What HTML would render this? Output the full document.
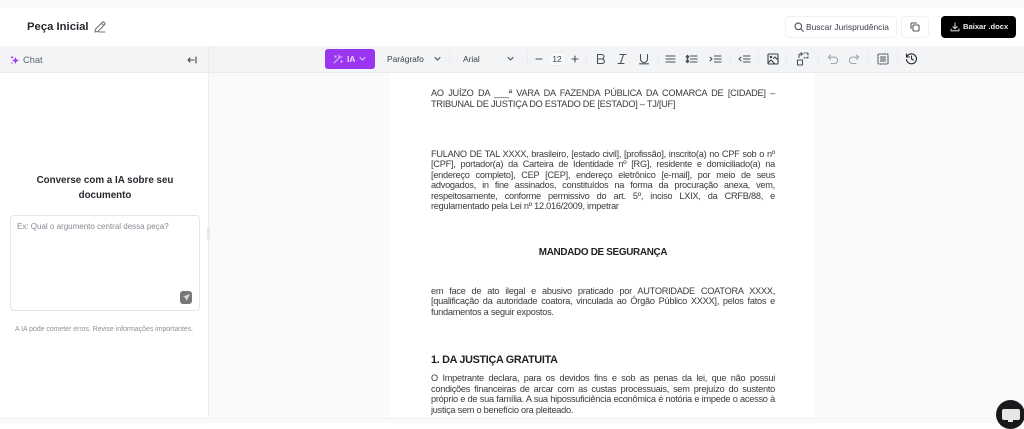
<!DOCTYPE html>
<html lang="pt-BR">
<head>
<meta charset="utf-8">
<title>Peça Inicial</title>
<style>
html,body{margin:0;padding:0;width:1024px;height:422px;overflow:hidden;background:#fff;font-family:"Liberation Sans",sans-serif;color:#1f2329}
.a{position:absolute}
.t{position:absolute;white-space:nowrap}
svg{position:absolute;fill:none;stroke:#4a505a;stroke-width:1.1;stroke-linecap:round;stroke-linejoin:round}
.sep{position:absolute;top:51px;width:1px;height:16px;background:#e9ebee}
.ln{position:absolute;left:431px;width:344px;font-size:9.2px;letter-spacing:-.25px;line-height:11px;height:11px;color:#3a3a3a;text-align:justify;text-align-last:justify;white-space:normal}
.ln.l{text-align-last:left;white-space:nowrap}
.btn{position:absolute;box-sizing:border-box;background:#fff;border:1px solid #f0f1f3;border-radius:4px}
</style>
</head>
<body>
<div class="a" style="left:0;top:0;width:1024px;height:8px;background:#fafafa"></div>

<div class="t" style="left:27px;top:20px;font-size:11.3px;font-weight:bold;line-height:15px;color:#26292e">Peça Inicial</div>
<svg style="left:94px;top:21px;stroke:#777" width="12" height="12" viewBox="0 0 12 12" stroke-width=".9"><path d="M1 11l.6-3L8.500 1.200a1 1 0 0 1 1.400 0l.9.9a1 1 0 0 1 0 1.400L4 10.400zM7.500 2.300l2.200 2.200M5 11h6"/></svg>

<div class="btn" style="left:785px;top:16px;width:112px;height:22px"></div>
<svg style="left:794px;top:22px;stroke:#444" width="10" height="10" viewBox="0 0 10 10"><circle cx="4.300" cy="4.300" r="3.300" stroke-width="1"/><path d="M7 7l2.300 2.300" stroke-width="1"/></svg>
<div class="t" style="left:806px;top:21px;font-size:8.4px;line-height:12px;color:#39404a">Buscar Jurisprudência</div>
<div class="btn" style="left:901px;top:16px;width:28px;height:22px"></div>
<svg style="left:910px;top:22px;stroke:#555" width="10" height="10" viewBox="0 0 10 10" stroke-width=".9"><rect x="3" y="3" width="6" height="6" rx="1"/><path d="M1 6.500V2a1 1 0 0 1 1-1h4.500"/></svg>
<div class="a" style="left:941px;top:16px;width:75px;height:22px;background:#000;border-radius:4px"></div>
<svg style="left:950px;top:22px;stroke:#ccc" width="10" height="10" viewBox="0 0 10 10" stroke-width=".9"><path d="M5 1v5.500M3 4.700l2 2 2-2M1 7v1.800h8V7"/></svg>
<div class="t" style="left:963px;top:21px;font-size:7.6px;font-weight:bold;line-height:12px;color:#eee">Baixar .docx</div>

<!-- toolbar band -->
<div class="a" style="left:0;top:46px;width:1024px;height:26px;background:#f3f4f6;border-bottom:1px solid #e8eaed;box-sizing:content-box"></div>
<div class="a" style="left:208px;top:46px;width:1px;height:26px;background:#e8eaed"></div>

<!-- content background -->
<div class="a" style="left:208px;top:73px;width:816px;height:349px;background:#fafafa"></div>
<div class="a" style="left:208px;top:73px;width:1px;height:349px;background:#eceef0"></div>
<div class="a" style="left:390px;top:73px;width:425px;height:349px;background:#fff"></div>
<div class="a" style="left:207px;top:227px;width:3px;height:12px;background:#e6e8eb"></div>

<!-- sidebar head -->
<svg style="left:10px;top:55px;stroke:none;fill:#a033f5" width="10" height="10" viewBox="0 0 10 10"><path d="M5.500 2l1 2.500L9 5.500l-2.500 1-1 2.500-1-2.500-2.500-1 2.500-1zM2 .5l.5 1.200 1.200.5-1.200.5L2 3.900l-.5-1.200L.3 2.200l1.200-.5zM2 7l.3.8.8.3-.8.3L2 9.200l-.3-.8-.8-.3.8-.3z"/></svg>
<div class="t" style="left:23px;top:54px;font-size:9.3px;line-height:12px;color:#5f656e">Chat</div>
<svg style="left:187px;top:55px;stroke:#444" width="10" height="10" viewBox="0 0 10 10" stroke-width="1"><path d="M9 2v6M7 5H1M3 3L1 5l2 2"/></svg>

<!-- sidebar body -->
<div class="t" style="left:0;top:173px;width:210px;text-align:center;font-size:9.8px;font-weight:bold;line-height:15px;color:#26292e;white-space:normal">Converse com a IA sobre seu<br>documento</div>
<div class="a" style="left:10px;top:215px;width:190px;height:96px;box-sizing:border-box;background:#fff;border:1px solid #e3e5e8;border-radius:4px"></div>
<div class="t" style="left:17px;top:221px;font-size:8px;line-height:12px;color:#858b93">Ex: Qual o argumento central dessa peça?</div>
<div class="a" style="left:180px;top:291px;width:12px;height:13px;background:#777;border-radius:3px"></div>
<svg style="left:183px;top:294px;stroke:none;fill:#ddd" width="7" height="7" viewBox="0 0 7 7"><path d="M7 0L0 2.800l2.400 1L3.500 7z"/></svg>
<div class="t" style="left:15px;top:324px;font-size:6.9px;line-height:11px;color:#8c9199">A IA pode cometer erros. Revise informações importantes.</div>

<!-- toolbar -->
<div class="a" style="left:325px;top:49px;width:50px;height:20px;background:#9a35f2;border-radius:3px"></div>
<svg style="left:333px;top:54px;stroke:#e0c2ff" width="10" height="10" viewBox="0 0 10 10" stroke-width="1"><path d="M1 9l6-6M6 1v2M8 3h1M2 2l1 1M3 2L2 3M8 7l1 1M9 7L8 8"/></svg>
<div class="t" style="left:347px;top:53px;font-size:8.4px;font-weight:bold;line-height:12px;color:#ecdcff">IA</div>
<svg style="left:359px;top:56px;stroke:#e0c2ff" width="7" height="6" viewBox="0 0 7 6" stroke-width="1"><path d="M1 1.500l2.500 2.500L6 1.500"/></svg>

<div class="t" style="left:387px;top:53px;font-size:8.4px;line-height:12px;color:#3a414b">Parágrafo</div>
<svg style="left:434px;top:56px" width="7" height="6" viewBox="0 0 7 6" stroke-width=".9"><path d="M1 1.500l2.500 2.500L6 1.500"/></svg>
<div class="sep" style="left:449px"></div>
<div class="t" style="left:463px;top:53px;font-size:8.4px;line-height:12px;color:#3a414b">Arial</div>
<svg style="left:507px;top:56px" width="7" height="6" viewBox="0 0 7 6" stroke-width=".9"><path d="M1 1.500l2.500 2.500L6 1.500"/></svg>
<div class="sep" style="left:527px"></div>
<svg style="left:534px;top:54px" width="10" height="10" viewBox="0 0 10 10" stroke-width="1"><path d="M2 5h6"/></svg>
<div class="a" style="left:548px;top:52px;width:18px;height:14px;box-sizing:border-box;background:#f8f9fa;border:1px solid #eceef0;border-radius:3px"></div>
<div class="t" style="left:548px;top:53px;width:18px;text-align:center;font-size:8.4px;line-height:13px;color:#3a414b">12</div>
<svg style="left:570px;top:54px" width="10" height="10" viewBox="0 0 10 10" stroke-width="1"><path d="M2 5h6M5 2v6"/></svg>
<div class="sep" style="left:586px"></div>
<svg style="left:595px;top:53px" width="12" height="12" viewBox="0 0 12 12"><path d="M2.500 1.500h4.200a2.200 2.200 0 0 1 0 4.500H2.500zM2.500 6h5a2.300 2.300 0 0 1 0 4.500h-5z"/></svg>
<svg style="left:616px;top:53px" width="12" height="12" viewBox="0 0 12 12"><path d="M4 1.500h6M2 10.500h6M7.500 1.500l-3 9"/></svg>
<svg style="left:638px;top:53px" width="12" height="12" viewBox="0 0 12 12"><path d="M2.500 1.500v4.500a3.500 3.500 0 0 0 7 0V1.500M1.500 10.800h9"/></svg>
<div class="sep" style="left:658px"></div>
<svg style="left:665px;top:54px" width="11" height="10" viewBox="0 0 11 10"><path d="M1 2h9M1 5h9M1 8h9"/></svg>
<svg style="left:685px;top:54px" width="13" height="10" viewBox="0 0 13 10"><path d="M5.500 2h6.500M5.500 5h6.500M5.500 8h6.500"/><path stroke-width="1.500" d="M2.500 1.500v7M1.300 3L2.500 1.500 3.700 3M1.300 7l1.200 1.500L3.700 7"/></svg>
<svg style="left:709px;top:54px" width="13" height="10" viewBox="0 0 13 10"><path d="M5.500 2h6.500M5.500 5h6.500M5.500 8h6.500M1 3.200l2 1.800-2 1.800"/></svg>
<div class="sep" style="left:730px"></div>
<svg style="left:738px;top:54px" width="13" height="10" viewBox="0 0 13 10"><path d="M5.500 2h6.500M5.500 5h6.500M5.500 8h6.500M3 3.200L1 5l2 1.800"/></svg>
<div class="sep" style="left:758px"></div>
<svg style="left:767px;top:53px;stroke:#3a414b" width="12" height="12" viewBox="0 0 12 12" stroke-width="1.300"><rect x="1" y="1" width="10" height="10" rx=".8"/><path d="M1.500 9.500L4 7l3.500 3.500M6.500 5.500l1.500-1.500 2.500 2.500"/><circle cx="4" cy="4" r=".7"/></svg>
<div class="sep" style="left:786px"></div>
<svg style="left:796px;top:52px" width="13" height="14" viewBox="0 0 13 14"><rect x="1.500" y="8" width="5" height="5"/><path d="M3 5.500V3.500a1.500 1.500 0 0 1 1.500-1.500H6M5 .8L6.500 2 5 3.200M8 1h1M10.500 1h1a1 1 0 0 1 .5 1v1M8 5.800h1M10.500 5.800h1.500V5"/></svg>
<div class="sep" style="left:818px"></div>
<svg style="left:827px;top:53px;stroke:#a0a5ac" width="12" height="12" viewBox="0 0 12 12"><path d="M3.500 2L1.500 4.200l2 2.200M1.500 4.200h6a3 3 0 0 1 0 6.300H4"/></svg>
<svg style="left:848px;top:53px;stroke:#a0a5ac" width="12" height="12" viewBox="0 0 12 12"><path d="M8.500 2l2 2.200-2 2.200M10.500 4.200h-6a3 3 0 0 0 0 6.300H8"/></svg>
<div class="sep" style="left:868px"></div>
<svg style="left:877px;top:53px" width="12" height="12" viewBox="0 0 12 12"><rect x="1" y="1" width="10" height="10" rx="1" stroke-dasharray="1.500 1.200"/><path d="M3.500 4h5M3.500 6h5M3.500 8h5"/></svg>
<div class="sep" style="left:897px"></div>
<svg style="left:905px;top:52px;stroke:#26292e" width="13" height="13" viewBox="0 0 13 13" stroke-width="1.200"><path d="M1.500 2v3h3M1.800 5a5 5 0 1 1-.3 2.500M6.500 4v3l2 1"/></svg>

<!-- document -->
<div class="ln" style="top:88px">AO JUÍZO DA ___ª VARA DA FAZENDA PÚBLICA DA COMARCA DE [CIDADE] –</div>
<div class="ln l" style="top:99px">TRIBUNAL DE JUSTIÇA DO ESTADO DE [ESTADO] – TJ/[UF]</div>
<div class="ln" style="top:149px">FULANO DE TAL XXXX, brasileiro, [estado civil], [profissão], inscrito(a) no CPF sob o nº</div>
<div class="ln" style="top:159px">[CPF], portador(a) da Carteira de Identidade nº [RG], residente e domiciliado(a) na</div>
<div class="ln" style="top:170px">[endereço completo], CEP [CEP], endereço eletrônico [e-mail], por meio de seus</div>
<div class="ln" style="top:180px">advogados, in fine assinados, constituídos na forma da procuração anexa, vem,</div>
<div class="ln" style="top:191px">respeitosamente, conforme permissivo do art. 5º, inciso LXIX, da CRFB/88, e</div>
<div class="ln l" style="top:201px">regulamentado pela Lei nº 12.016/2009, impetrar</div>
<div class="t" style="left:431px;top:246px;width:344px;text-align:center;font-size:9.9px;letter-spacing:-.3px;font-weight:bold;line-height:13px;color:#222">MANDADO DE SEGURANÇA</div>
<div class="ln" style="top:286px">em face de ato ilegal e abusivo praticado por AUTORIDADE COATORA XXXX,</div>
<div class="ln" style="top:296px">[qualificação da autoridade coatora, vinculada ao Órgão Público XXXX], pelos fatos e</div>
<div class="ln l" style="top:307px">fundamentos a seguir expostos.</div>
<div class="t" style="left:431px;top:353px;font-size:10.8px;letter-spacing:-.3px;font-weight:bold;line-height:14px;color:#222">1. DA JUSTIÇA GRATUITA</div>
<div class="ln" style="top:373px">O Impetrante declara, para os devidos fins e sob as penas da lei, que não possui</div>
<div class="ln" style="top:384px">condições financeiras de arcar com as custas processuais, sem prejuízo do sustento</div>
<div class="ln" style="top:394px">próprio e de sua família. A sua hipossuficiência econômica é notória e impede o acesso à</div>
<div class="ln l" style="top:405px">justiça sem o benefício ora pleiteado.</div>

<!-- bottom strip -->
<div class="a" style="left:0;top:418px;width:1024px;height:4px;background:#fafafa;border-top:1px solid #f0f1f3"></div>

<!-- chat bubble -->
<div class="a" style="left:996px;top:400px;width:29px;height:29px;background:#17191c;border-radius:50%"></div>
<div class="a" style="left:1002px;top:409px;width:18px;height:11px;background:#e6e6e6;border-radius:2px"></div>
<div class="a" style="left:1008px;top:418px;width:5px;height:4px;background:#e6e6e6"></div>
</body>
</html>
